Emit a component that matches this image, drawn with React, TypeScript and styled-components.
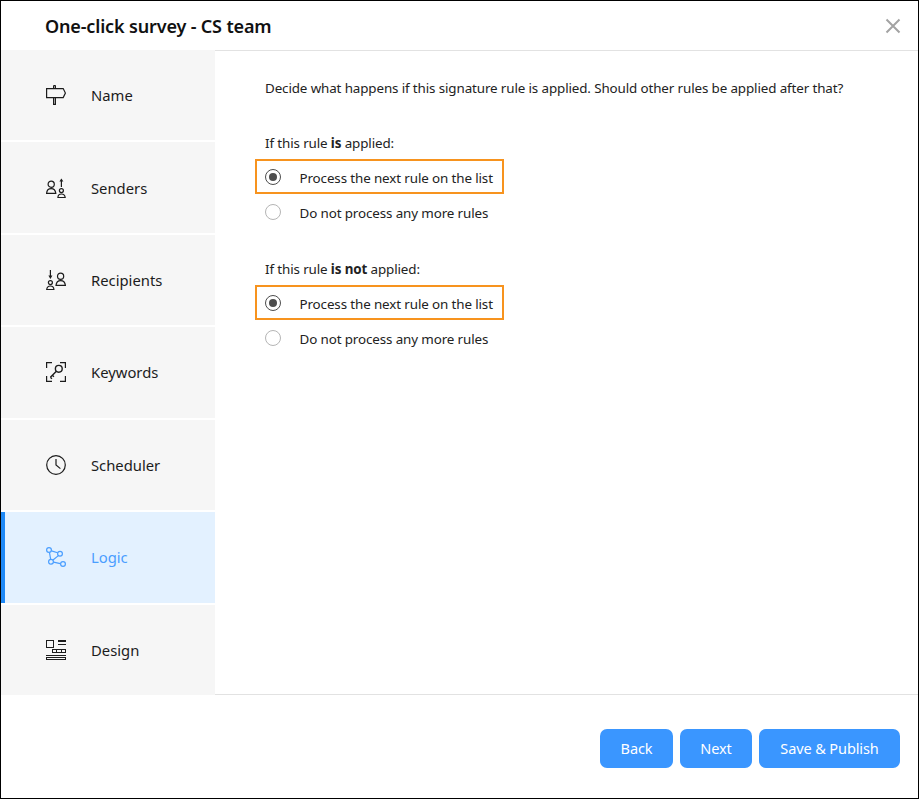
import React from 'react';
import styled, { createGlobalStyle } from 'styled-components';

const GlobalStyle = createGlobalStyle`
  html, body {
    margin: 0;
    padding: 0;
    background: #fff;
  }
  body {
    font-family: "Noto Sans", "Open Sans", Arial, sans-serif;
    color: #222;
  }
`;

const Dialog = styled.div`
  box-sizing: border-box;
  width: 919px;
  height: 799px;
  border: 1px solid #000;
  display: flex;
  flex-direction: column;
  background: #fff;
`;

const Header = styled.header`
  height: 49px;
  flex: none;
  display: flex;
  align-items: center;
  justify-content: space-between;
  padding: 0 17px 0 44px;
`;

const Title = styled.h1`
  margin: 0;
  font-size: 18px;
  font-weight: 600;
  color: #111;
  letter-spacing: -0.15px;
`;

const CloseButton = styled.button`
  border: 0;
  padding: 0;
  margin-top: 1px;
  background: none;
  display: flex;
  width: 16px;
  height: 16px;
  color: #a3a3a3;
`;

const Main = styled.div`
  height: 645px;
  flex: none;
  display: flex;
`;

const Sidebar = styled.nav`
  width: 214px;
  flex: none;
  display: flex;
  flex-direction: column;
  gap: 2px;
`;

const NavItem = styled.div<{ $active?: boolean }>`
  flex: 1;
  display: flex;
  align-items: center;
  gap: 25px;
  box-sizing: border-box;
  padding-left: ${(p) => (p.$active ? '41px' : '45px')};
  border-left: ${(p) => (p.$active ? '4px solid #1e88f5' : '0')};
  background: ${(p) => (p.$active ? '#e3f1ff' : '#f6f6f6')};
  color: ${(p) => (p.$active ? '#4a9eff' : '#1c1c1c')};
  font-size: 14.8px;
`;

const NavIcon = styled.svg`
  width: 20px;
  height: 20px;
  flex: none;
  fill: none;
  stroke: currentColor;
  stroke-width: 1.2;
`;

const Content = styled.section`
  flex: 1;
  box-sizing: border-box;
  border-top: 1px solid #e2e2e2;
  border-bottom: 1px solid #e2e2e2;
  padding: 28px 0 0 50px;
  font-size: 13.4px;
  line-height: 18px;
  letter-spacing: -0.12px;
`;

const Intro = styled.p`
  margin: 0 0 37px;
`;

const Group = styled.div`
  margin-bottom: 31px;
`;

const GroupLabel = styled.div`
  margin-bottom: 7px;
`;

const OptionRow = styled.label<{ $highlighted?: boolean }>`
  box-sizing: border-box;
  display: flex;
  align-items: center;
  gap: 18.5px;
  height: 35px;
  width: 249px;
  margin-left: -10px;
  padding-left: 8px;
  border: 2px solid ${(p) => (p.$highlighted ? '#f7931e' : 'transparent')};
`;

const OptionText = styled.span`
  padding-top: 2px;
`;

const Radio = styled.span<{ $checked?: boolean }>`
  box-sizing: border-box;
  width: 16px;
  height: 16px;
  border-radius: 50%;
  border: 1px solid ${(p) => (p.$checked ? '#4d4d4d' : '#b5b5b5')};
  flex: none;
  display: flex;
  align-items: center;
  justify-content: center;
  background: #fff;

  &::after {
    content: '';
    width: 8px;
    height: 8px;
    border-radius: 50%;
    background: ${(p) => (p.$checked ? '#4d4d4d' : 'transparent')};
  }
`;

const Footer = styled.footer`
  flex: 1;
  display: flex;
  justify-content: flex-end;
  align-items: flex-start;
  gap: 7px;
  padding: 34px 18px 0 0;
`;

const ActionButton = styled.button<{ $width: number }>`
  width: ${(p) => p.$width}px;
  height: 39px;
  padding: 0 0 2px;
  border: 0;
  border-radius: 7px;
  background: #3a96ff;
  color: #fff;
  font-family: inherit;
  font-size: 14.5px;
  letter-spacing: -0.1px;
`;

const SignIcon = () => (
  <NavIcon viewBox="0 0 20 20">
    <path d="M0.6 3.6H17.2L19.4 8.1L17.2 12.6H0.6Z" />
    <path d="M7.6 3.6V1.4C7.6 0 9.4 0 9.4 1.4V3.6M7.6 12.6V19.4H9.4V12.6" />
  </NavIcon>
);

const SendersIcon = () => (
  <NavIcon viewBox="0 0 20 20">
    <circle cx="5.2" cy="6.2" r="3.1" />
    <path d="M0.6 15.4C0.8 11.8 3 10.6 5.2 10.6C7.4 10.6 9.4 11.8 9.8 15.4Z" />
    <circle cx="15.4" cy="12.6" r="2" />
    <path d="M11.9 19.5C12 17 13.6 16 15.4 16C17.2 16 18.9 17 19.2 19.5Z" />
    <path d="M15.4 3V9" />
    <path d="M13.4 3.6L15.4 0.4L17.4 3.6Z" fill="currentColor" stroke="none" />
  </NavIcon>
);

const RecipientsIcon = () => (
  <NavIcon viewBox="0 0 20 20">
    <circle cx="14.6" cy="6.2" r="3.1" />
    <path d="M10 15.4C10.4 11.8 12.4 10.6 14.6 10.6C16.8 10.6 19 11.8 19.4 15.4Z" />
    <circle cx="4.4" cy="12.6" r="2" />
    <path d="M0.7 19.5C1 17 2.6 16 4.4 16C6.2 16 7.8 17 7.9 19.5Z" />
    <path d="M4.4 0V6" />
    <path d="M2.4 5.6L4.4 9L6.4 5.6Z" fill="currentColor" stroke="none" />
  </NavIcon>
);

const KeywordsIcon = () => (
  <NavIcon viewBox="0 0 20 20">
    <path d="M0.6 6V0.6H6M14 0.6H19.4V6M0.6 14V19.4H6M14 19.4H19.4V14" />
    <circle cx="12.8" cy="6.8" r="3.4" strokeWidth="1.4" />
    <path d="M10.4 9.2L4.4 15.2M6.4 13.2L7.9 14.7M4.4 15.2L5.9 16.7" strokeWidth="1.4" />
  </NavIcon>
);

const ClockIcon = () => (
  <NavIcon viewBox="0 0 20 20">
    <circle cx="10" cy="10" r="9.3" />
    <path d="M10 4V10L14.4 13.6" />
  </NavIcon>
);

const LogicIcon = () => (
  <NavIcon viewBox="0 0 20 20">
    <path d="M5.5 3.9L11.6 5.8M3.5 5.6L4.6 12M12.4 8.6L7 13M7.6 15.2L14.3 16.6" />
    <circle cx="3" cy="3" r="2.4" />
    <circle cx="14" cy="6.7" r="2.4" />
    <circle cx="5" cy="14.7" r="2.4" />
    <circle cx="17" cy="17" r="2.4" />
  </NavIcon>
);

const DesignIcon = () => (
  <NavIcon viewBox="0 0 20 20" shapeRendering="crispEdges">
    <rect x="0.5" y="0.5" width="7" height="7" strokeWidth="1" />
    <rect x="11.5" y="0" width="8.5" height="2" fill="currentColor" stroke="none" />
    <rect x="11.5" y="3.5" width="8.5" height="1" fill="currentColor" stroke="none" />
    <path d="M6.5 9.5H19.5V12.5H6.5ZM10.5 9.5V12.5M15.5 9.5V12.5" strokeWidth="1" />
    <rect x="0" y="14.5" width="20" height="1" fill="currentColor" stroke="none" />
    <rect x="0.5" y="17.5" width="19" height="2.2" strokeWidth="1" />
  </NavIcon>
);

const navItems = [
  { label: 'Name', icon: <SignIcon /> },
  { label: 'Senders', icon: <SendersIcon /> },
  { label: 'Recipients', icon: <RecipientsIcon /> },
  { label: 'Keywords', icon: <KeywordsIcon /> },
  { label: 'Scheduler', icon: <ClockIcon /> },
  { label: 'Logic', icon: <LogicIcon />, active: true },
  { label: 'Design', icon: <DesignIcon /> },
];

const RuleGroup = ({ children }: { children: React.ReactNode }) => (
  <Group>
    <GroupLabel>{children}</GroupLabel>
    <OptionRow $highlighted>
      <Radio $checked />
      <OptionText>Process the next rule on the list</OptionText>
    </OptionRow>
    <OptionRow>
      <Radio />
      <OptionText>Do not process any more rules</OptionText>
    </OptionRow>
  </Group>
);

export default function App() {
  return (
    <>
      <GlobalStyle />
      <Dialog>
        <Header>
          <Title>One-click survey - CS team</Title>
          <CloseButton aria-label="Close">
            <svg viewBox="0 0 16 16" width="16" height="16" stroke="currentColor" strokeWidth="2" fill="none">
              <path d="M1.5 1.5L14.5 14.5M14.5 1.5L1.5 14.5" />
            </svg>
          </CloseButton>
        </Header>
        <Main>
          <Sidebar>
            {navItems.map((item) => (
              <NavItem key={item.label} $active={item.active}>
                {item.icon}
                {item.label}
              </NavItem>
            ))}
          </Sidebar>
          <Content>
            <Intro>Decide what happens if this signature rule is applied. Should other rules be applied after that?</Intro>
            <RuleGroup>
              If this rule <b>is</b> applied:
            </RuleGroup>
            <RuleGroup>
              If this rule <b>is not</b> applied:
            </RuleGroup>
          </Content>
        </Main>
        <Footer>
          <ActionButton $width={73}>Back</ActionButton>
          <ActionButton $width={72}>Next</ActionButton>
          <ActionButton $width={141}>Save &amp; Publish</ActionButton>
        </Footer>
      </Dialog>
    </>
  );
}
